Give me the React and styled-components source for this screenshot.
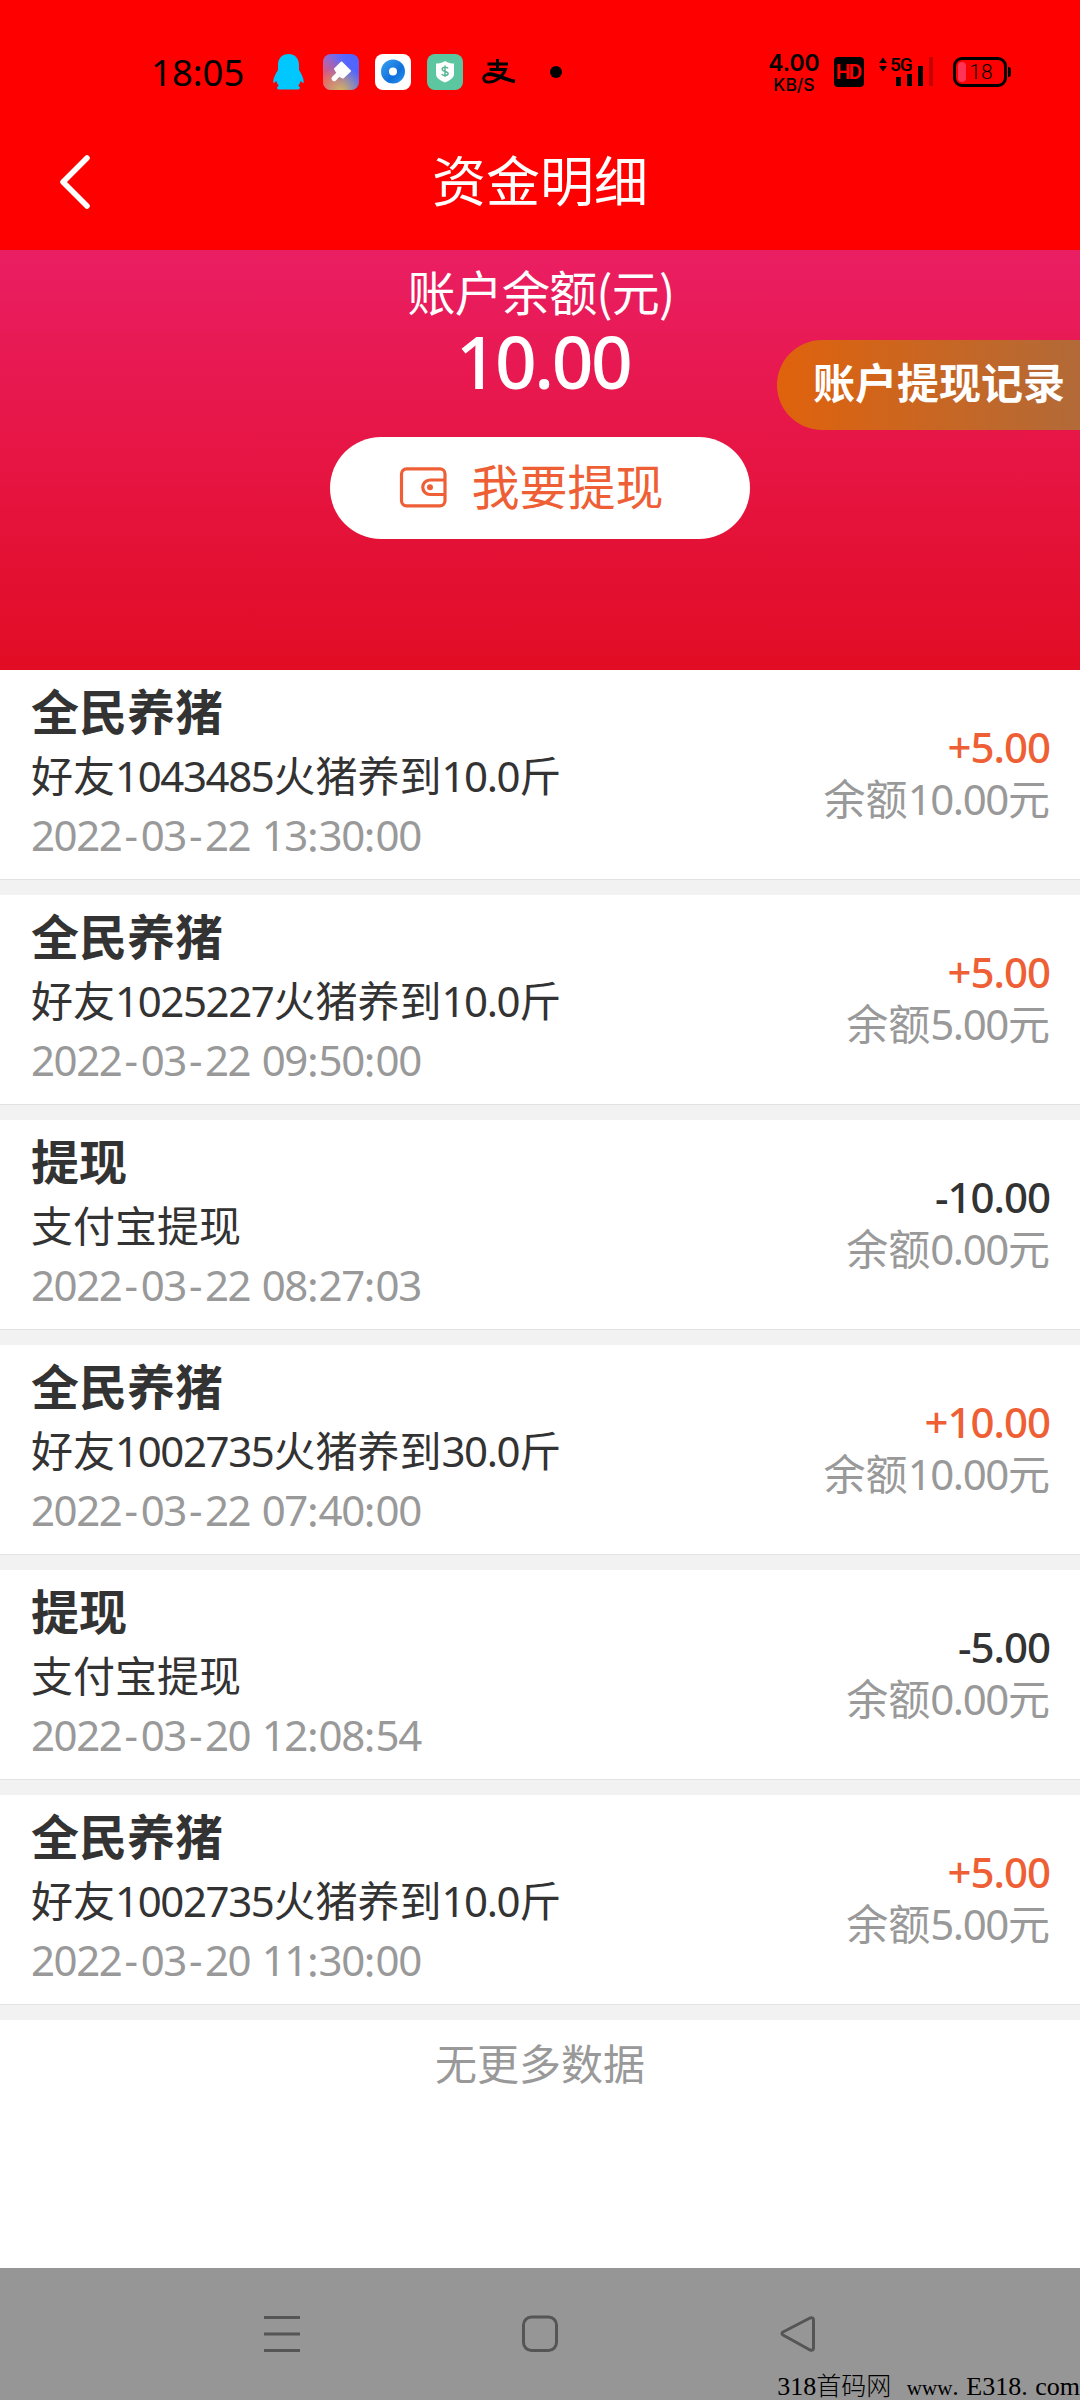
import React from 'react'
import styled, { createGlobalStyle } from 'styled-components';

const theme = {
  red: '#ff0000',
  orange: '#ee5f36',
  dark: '#333333',
  gray: '#999999',
  line: '#e2e2e2',
  gap: '#f2f2f2',
}

const records = [
  { id: 1, title: '全民养猪', description: '好友1043485火猪养到10.0斤', date: '2022-03-22 13:30:00', amount: '+5.00', balance: '10.00' },
  { id: 2, title: '全民养猪', description: '好友1025227火猪养到10.0斤', date: '2022-03-22 09:50:00', amount: '+5.00', balance: '5.00' },
  { id: 3, title: '提现', description: '支付宝提现', date: '2022-03-22 08:27:03', amount: '-10.00', balance: '0.00' },
  { id: 4, title: '全民养猪', description: '好友1002735火猪养到30.0斤', date: '2022-03-22 07:40:00', amount: '+10.00', balance: '10.00' },
  { id: 5, title: '提现', description: '支付宝提现', date: '2022-03-20 12:08:54', amount: '-5.00', balance: '0.00' },
  { id: 6, title: '全民养猪', description: '好友1002735火猪养到10.0斤', date: '2022-03-20 11:30:00', amount: '+5.00', balance: '5.00' },
]

// sets the digits of a mixed line in the latin font
function Mixed({ text }) {
  return text.split(/([\d.]+|-)/).map((part, i) => {
    if (part === '-') return <Dash key={i}>-</Dash>
    return /\d/.test(part) ? <Num key={i}>{part}</Num> : part
  })
}

function PenguinIcon() {
  return (
    <svg width="31" height="36" viewBox="0 0 31 36">
      <path fill="#00c8ff" d="M15.500 0C9 0 5 4.500 5 11v5C3 19 .3 24 .3 28c.2 1.800 1.500.6 3-1.200.4 2 1.300 3.700 2.700 5-2.500.7-2.500 3.700 0 3.700h19c2.500 0 2.500-3 0-3.700 1.400-1.300 2.300-3 2.700-5 1.300 1.800 2.800 3 3 1.200.1-4-2.700-9-4.700-12v-5C26 4.500 22 0 15.500 0z" />
    </svg>
  )
}

function BrushIcon() {
  return (
    <svg width="36" height="36" viewBox="0 0 36 36">
      <defs>
        <linearGradient id="brushTop" x1="0" y1=".2" x2="1" y2=".2">
          <stop offset="0" stopColor="#9a6ad0" />
          <stop offset=".6" stopColor="#5468ff" />
          <stop offset="1" stopColor="#4f63ff" />
        </linearGradient>
        <radialGradient id="brushLeft" cx="0" cy=".75" r=".75">
          <stop offset="0" stopColor="#f0565c" />
          <stop offset="1" stopColor="#f0565c" stopOpacity="0" />
        </radialGradient>
        <radialGradient id="brushBottom" cx=".5" cy="1.050" r=".7">
          <stop offset="0" stopColor="#d8b55c" />
          <stop offset="1" stopColor="#d8b55c" stopOpacity="0" />
        </radialGradient>
      </defs>
      <rect width="36" height="36" rx="8" fill="url(#brushTop)" />
      <rect width="36" height="36" rx="8" fill="url(#brushLeft)" />
      <rect width="36" height="36" rx="8" fill="url(#brushBottom)" />
      <path fill="#fff" stroke="#fff" strokeWidth="2" strokeLinejoin="round" d="M18.500 8.500l8.500 8.500-7 6.500-4-2L12 26c-1.500 1-3.500-1-2-2.500l4.500-4.500-2.500-4z" />
    </svg>
  )
}

function EyeIcon() {
  return (
    <svg width="36" height="36" viewBox="0 0 36 36">
      <defs>
        <linearGradient id="eye" x1="0" y1="0" x2="1" y2="1">
          <stop offset="0" stopColor="#3ba3f2" />
          <stop offset=".6" stopColor="#1070dc" />
          <stop offset="1" stopColor="#2a97f0" />
        </linearGradient>
      </defs>
      <rect width="36" height="36" rx="8" fill="#fff" />
      <circle cx="18" cy="17.500" r="12" fill="url(#eye)" />
      <circle cx="18" cy="17.500" r="4" fill="#fff" />
    </svg>
  )
}

function ShieldIcon() {
  return (
    <svg width="36" height="36" viewBox="0 0 36 36">
      <rect width="36" height="36" rx="8" fill="#5cc6a0" />
      <path fill="#fff" d="M18 7c3 2 6 2.500 9 2.500V20c0 4-4.500 6.500-9 8.500-4.500-2-9-4.500-9-8.500V9.500c3 0 6-.5 9-2.500z" />
      <path fill="none" stroke="#5cb894" strokeWidth="1.500" d="M21 14.500c-.5-1.500-5.800-1.800-5.800.8 0 2.700 5.900 1.600 5.900 4.300 0 2.600-5.600 2.300-6.200.5M18 11.500v11.500" />
    </svg>
  )
}

function PayIcon() {
  return (
    <svg width="34" height="26" viewBox="0 0 34 26" fill="none" stroke="#000">
      <path strokeWidth="3" d="M5.500 5H26M15.500 0v10" />
      <path strokeWidth="2.800" d="M7.500 10.500h16C21 17 13.500 23.500 6.500 23.200 1 23 0 17.500 5 15.500" />
      <path strokeWidth="3.600" d="M5 15.500C12 13 20 20 33 22.500" />
    </svg>
  )
}

function SignalIcon() {
  return (
    <svg width="60" height="32" viewBox="0 0 60 32">
      <path fill="#000" d="M1 7l4-5.500L9 7zM1 10l4 5.500L9 10z" />
      <rect x="18" y="21" width="5" height="9" fill="#000" />
      <rect x="29" y="18" width="5" height="12" fill="#000" />
      <rect x="40" y="10" width="5" height="20" fill="#000" />
      <rect x="51" y="1" width="4" height="29" fill="#c80000" />
    </svg>
  )
}

function WalletIcon() {
  return (
    <svg width="48" height="42" viewBox="0 0 48 42" fill="none" stroke={theme.orange} strokeWidth="3.200">
      <rect x="2.500" y="1.800" width="43.500" height="37" rx="5" />
      <path d="M46 13H31a7.250 7.250 0 0 0 0 14.500h15" />
      <circle cx="31" cy="20.200" r="3" fill={theme.orange} stroke="none" />
    </svg>
  )
}

export default function App() {
  return (
    <Page>
      <GlobalStyle />
      <StatusBar>
        <Clock>18:05</Clock>
        <AppIcons>
          <PenguinIcon />
          <BrushIcon />
          <EyeIcon />
          <ShieldIcon />
          <PayIcon />
        </AppIcons>
        <Dot />
        <Speed>
          <strong>4.00</strong>
          <span>KB/S</span>
        </Speed>
        <HdBadge>HD</HdBadge>
        <Signal>
          <SignalIcon />
          <span>5G</span>
        </Signal>
        <Battery>18</Battery>
      </StatusBar>
      <TitleBar>
        <svg width="34" height="58" viewBox="0 0 34 58" fill="none" stroke="#fff" strokeWidth="5.500" strokeLinecap="round" strokeLinejoin="round">
          <path d="M30 5L6 29l24 24" />
        </svg>
        <h1>资金明细</h1>
      </TitleBar>
      <Account>
        <AccountLabel>账户余额(元)</AccountLabel>
        <AccountValue>10.00</AccountValue>
        <WithdrawButton>
          <WalletIcon />
          <span>我要提现</span>
        </WithdrawButton>
        <HistoryTag>账户提现记录</HistoryTag>
      </Account>
      <List>
        {
          records.map((r) => {
            return (
              <Record key={r.id}>
                <div>
                  <RecordTitle>{r.title}</RecordTitle>
                  <Description><Mixed text={r.description} /></Description>
                  <RecordDate><Mixed text={r.date} /></RecordDate>
                </div>
                <Money>
                  <Amount $income={r.amount.startsWith('+')}>{r.amount}</Amount>
                  <Balance><Mixed text={`余额${r.balance}元`} /></Balance>
                </Money>
              </Record>
            )
          })
        }
      </List>
      <NoMore>无更多数据</NoMore>
      <NavBar>
        <svg width="36" height="37" viewBox="0 0 36 37" stroke="#555" strokeWidth="3">
          <path d="M0 2.500h36M0 19h36M0 35.500h36" />
        </svg>
        <svg width="36" height="37" viewBox="0 0 36 37" fill="none" stroke="#555" strokeWidth="3">
          <rect x="1.500" y="2" width="33" height="33.500" rx="8" />
        </svg>
        <svg width="36" height="37" viewBox="0 0 36 37" fill="none" stroke="#555" strokeWidth="3" strokeLinejoin="round">
          <path d="M30 3L3 17q-2 1.500 0 3L30 35q3.500 1 3.500-2V5q0-3-3.500-2z" />
        </svg>
        <Watermark>318<span>首码网</span> <small>www</small><i>.</i>E318<i>.</i>com</Watermark>
      </NavBar>
    </Page>
  )
}

const GlobalStyle = createGlobalStyle`
  *{
    box-sizing:border-box;
    margin:0;
    padding:0;
  }
  body{
    background:#fff;
    font-family:"Noto Sans CJK SC", sans-serif;
    color:${theme.dark};
  }
  svg{
    display:block;
    flex-shrink:0;
  }
`

const Page = styled.div`
  display:flex;
  flex-direction:column;
  width:1080px;
  height:2400px;
  overflow:hidden;
`

const Num = styled.span`
  font-family:"Noto Sans", sans-serif;
  line-height:0;
  letter-spacing:-1.400px;
`

const Dash = styled(Num)`
  padding:0 4px 0 3px;
`

const StatusBar = styled.div`
  display:flex;
  align-items:center;
  height:114px;
  padding:30px 67px 0 151px;
  background:${theme.red};
  color:#000;
`

const Clock = styled.div`
  width:122px;
  font-family:"Noto Sans", sans-serif;
  font-size:36.500px;
  line-height:40px;
`

const AppIcons = styled.div`
  display:flex;
  align-items:center;
  gap:16px;
  svg:first-child{
    margin-right:3px;
  }
  svg:last-child{
    margin-left:3px;
  }
`

const Dot = styled.div`
  width:12px;
  height:12px;
  margin-left:34px;
  border-radius:50%;
  background:#000;
`

const Speed = styled.div`
  display:flex;
  flex-direction:column;
  align-items:center;
  width:56px;
  margin:3px 12px 0 auto;
  font-family:Inter, sans-serif;
  font-weight:500;
  strong{
    font-size:23px;
    font-weight:600;
    line-height:21px;
  }
  span{
    font-size:17.500px;
    line-height:21px;
  }
`

const HdBadge = styled.div`
  width:30px;
  height:30px;
  margin-right:14px;
  border-radius:4px;
  background:#000;
  color:${theme.red};
  font-family:Roboto, sans-serif;
  font-size:21px;
  font-weight:600;
  line-height:30px;
  letter-spacing:-2px;
  text-indent:-2px;
  text-align:center;
`

const Signal = styled.div`
  position:relative;
  span{
    position:absolute;
    left:12px;
    top:-2px;
    font-family:Roboto, sans-serif;
    font-size:19px;
    font-weight:500;
    line-height:22px;
    letter-spacing:-1px;
  }
`

const Battery = styled.div`
  position:relative;
  width:54px;
  height:30px;
  margin:0 6px 0 15px;
  border:3px solid #000;
  border-radius:9px;
  font-family:Roboto, sans-serif;
  font-size:21px;
  font-weight:300;
  line-height:25px;
  text-align:center;
  text-indent:2px;
  &:before{
    content:'';
    position:absolute;
    left:2px;
    top:2px;
    width:8px;
    height:20px;
    border-radius:4px;
    background:#ff3355;
  }
  &:after{
    content:'';
    position:absolute;
    right:-7px;
    top:7px;
    width:3px;
    height:10px;
    border-radius:0 3px 3px 0;
    background:#000;
  }
`

const TitleBar = styled.header`
  display:flex;
  align-items:center;
  height:136px;
  padding:0 57px;
  background:${theme.red};
  color:#fff;
  h1{
    flex:1;
    margin-right:34px;
    padding-bottom:6px;
    font-size:54px;
    font-weight:400;
    line-height:72px;
    text-align:center;
  }
`

const Account = styled.section`
  position:relative;
  display:flex;
  flex-direction:column;
  align-items:center;
  height:420px;
  padding-top:12px;
  background:linear-gradient(#ea1e63, #e20c24);
  color:#fff;
`

const AccountLabel = styled.p`
  padding-left:2px;
  font-size:48px;
  line-height:56px;
  letter-spacing:-0.8px;
`

const AccountValue = styled.p`
  padding-left:6px;
  font-family:"Noto Sans", sans-serif;
  font-size:73px;
  font-weight:500;
  line-height:86px;
  letter-spacing:-2.500px;
`

const WithdrawButton = styled.button`
  display:flex;
  align-items:center;
  justify-content:center;
  gap:24px;
  width:420px;
  height:102px;
  margin-top:33px;
  padding-right:17px;
  border:none;
  border-radius:51px;
  background:#fff;
  color:${theme.orange};
  font-family:inherit;
  font-size:48px;
  line-height:60px;
  span{
    padding-bottom:9px;
  }
`

const HistoryTag = styled.div`
  position:absolute;
  right:0;
  top:90px;
  width:303px;
  height:90px;
  padding-left:36px;
  border-radius:45px 0 0 45px;
  background:linear-gradient(90deg, #e0620c, #b26a38);
  font-size:42px;
  font-weight:700;
  line-height:82px;
  white-space:nowrap;
`

const List = styled.div`
  background:${theme.gap};
`

const Record = styled.div`
  display:flex;
  justify-content:space-between;
  height:210px;
  margin-bottom:15px;
  padding:9px 30px 0 31px;
  border-bottom:1px solid ${theme.line};
  background:#fff;
`

const RecordTitle = styled.h2`
  font-size:48px;
  font-weight:700;
  line-height:60px;
`

const Description = styled.p`
  margin-top:4px;
  font-size:42px;
  line-height:62px;
`

const RecordDate = styled.p`
  font-size:42px;
  line-height:56px;
  word-spacing:2px;
  color:${theme.gray};
`

const Money = styled.div`
  padding-top:41px;
  text-align:right;
`

const Amount = styled.p`
  font-family:"Noto Sans", sans-serif;
  font-size:42px;
  font-weight:500;
  line-height:54px;
  letter-spacing:-1px;
  color:${({ $income }) => ($income ? theme.orange : theme.dark)};
`

const Balance = styled.p`
  font-size:42px;
  line-height:46px;
  color:${theme.gray};
`

const NoMore = styled.p`
  flex:1;
  padding-top:14px;
  font-size:42px;
  line-height:56px;
  text-align:center;
  color:${theme.gray};
`

const NavBar = styled.nav`
  position:relative;
  display:flex;
  justify-content:center;
  gap:222px;
  height:132px;
  padding-top:47px;
  background:#969696;
`

const Watermark = styled.div`
  position:absolute;
  right:0;
  bottom:0;
  font-family:"Liberation Serif", serif;
  font-size:26px;
  line-height:26px;
  color:#000;
  white-space:pre;
  span{
    margin-right:9px;
    font-family:"Noto Sans CJK SC", sans-serif;
    font-size:25px;
    font-weight:300;
    line-height:0;
  }
  small{
    font-size:21px;
    line-height:0;
  }
  i{
    font-style:normal;
    letter-spacing:7.500px;
  }
`
